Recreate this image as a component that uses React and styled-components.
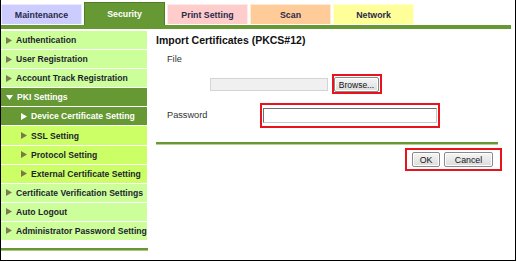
import React from "react";
import styled, { createGlobalStyle } from "styled-components";

const Global = createGlobalStyle`
  html, body { margin: 0; padding: 0; background: #fff; }
  body { font-family: "Liberation Sans", Arial, sans-serif; }
`;

const Frame = styled.div`
  box-sizing: border-box;
  width: 516px;
  height: 261px;
  border: 1px solid #000;
  border-top: none;
  background: #fff;
  display: flex;
  flex-direction: column;
  overflow: hidden;
`;

const TabBar = styled.div`
  display: flex;
  align-items: flex-end;
  gap: 2px;
  height: 25px;
`;

const TABS = {
  maintenance: { bg: "#ccccff", fg: "#2a2a4a" },
  security: { bg: "#669933", fg: "#ffffff" },
  print: { bg: "#ffcccc", fg: "#2a2a4a" },
  scan: { bg: "#ffcc99", fg: "#2a2a4a" },
  network: { bg: "#ffff99", fg: "#2a2a4a" },
};

const Tab = styled.div`
  box-sizing: border-box;
  width: 81px;
  height: ${(p) => (p.$active ? "23px" : "20px")};
  margin-bottom: ${(p) => (p.$active ? "0" : "1px")};
  background: ${(p) => TABS[p.$kind].bg};
  color: ${(p) => TABS[p.$kind].fg};
  border: 1px solid ${(p) => (p.$active ? "#4f7d25" : "rgba(255,255,255,0.6)")};
  border-bottom: none;
  font-size: 8.8px;
  font-weight: bold;
  display: flex;
  align-items: center;
  justify-content: center;
`;

const GreenBar = styled.div`
  height: 4px;
  margin-right: 4px;
  background: #669933;
`;

const Body = styled.div`
  display: flex;
  flex: 1;
`;

const Sidebar = styled.div`
  width: 146px;
  padding-top: 2px;
  display: flex;
  flex-direction: column;
`;

const ROW = {
  top: { bg: "#ccff99", fg: "#1e1e30", arrow: "#7a7a55" },
  sub: { bg: "#ccff66", fg: "#1e1e30", arrow: "#7a7a44" },
  open: { bg: "#669933", fg: "#ffffff", arrow: "#ffffff" },
  current: { bg: "#669933", fg: "#ffffff", arrow: "#ffffff" },
};

const NavRow = styled.div`
  box-sizing: border-box;
  height: 19.1px;
  border-bottom: 1px solid #fff;
  background: ${(p) => ROW[p.$kind].bg};
  color: ${(p) => ROW[p.$kind].fg};
  font-size: 8.6px;
  font-weight: bold;
  display: flex;
  align-items: center;
  gap: 4px;
  padding-left: ${(p) => (p.$indent ? "20px" : "5px")};
  white-space: nowrap;
  svg { flex-shrink: 0; }
`;

const SideRule = styled.div`
  height: 2px;
  margin-top: 7px;
  margin-right: -1px;
  background: #669933;
  border-bottom: 1px solid #a8c884;
`;

const Arrow = ({ color, down }) =>
  down ? (
    <svg width="7" height="7" viewBox="0 0 7 7">
      <polygon points="0,1 7,1 3.5,6" fill={color} />
    </svg>
  ) : (
    <svg width="6" height="7" viewBox="0 0 6 7">
      <polygon points="0,0 6,3.5 0,7" fill={color} />
    </svg>
  );

const Content = styled.div`
  flex: 1;
  padding-left: 2px;
  display: flex;
  flex-direction: column;
`;

const Title = styled.div`
  margin-top: 4px;
  margin-left: 7px;
  font-size: 10.5px;
  line-height: 15px;
  font-weight: bold;
  color: #111;
`;

const Label = styled.div`
  font-size: 9.2px;
  line-height: 13px;
  color: #333;
  width: ${(p) => p.$w || "auto"};
`;

const FileLabel = styled(Label)`
  margin-top: 5px;
  margin-left: 18px;
`;

const FileRow = styled.div`
  margin-top: 8px;
  margin-left: 61px;
  display: flex;
  align-items: center;
  gap: 4px;
`;

const FileBox = styled.div`
  box-sizing: border-box;
  width: 118px;
  height: 13px;
  background: #f0f0f0;
  border: 1px solid #d4d4d4;
`;

const Highlight = styled.div`
  border: 2px solid #e8141c;
  display: flex;
  align-items: center;
  gap: 4px;
  padding: ${(p) => p.$pad};
`;

const Button = styled.button`
  box-sizing: border-box;
  width: ${(p) => p.$w};
  height: ${(p) => p.$h || "15px"};
  padding: 0;
  margin: 0;
  font-family: "Liberation Sans", Arial, sans-serif;
  font-size: ${(p) => p.$fs || "8.8px"};
  color: #111;
  background: linear-gradient(#f6f6f6, #dcdcdc);
  border: 1px solid #8a8a8a;
  border-radius: 2px;
  box-shadow: inset 0 0 0 1px #fff;
  display: flex;
  align-items: center;
  justify-content: center;
`;

const PasswordRow = styled.div`
  margin-top: 9px;
  margin-left: 18px;
  display: flex;
  align-items: center;
`;

const TextInput = styled.div`
  box-sizing: border-box;
  width: 174px;
  height: 15px;
  background: #fff;
  border: 1px solid #8e8e8e;
  border-top-color: #6e6e6e;
  border-left-color: #6e6e6e;
  border-bottom-color: #c8c8c8;
  border-right-color: #c8c8c8;
`;

const ContentRule = styled.div`
  margin-top: 14px;
  margin-left: 7px;
  width: 342px;
  height: 2px;
  background: #669933;
  border-bottom: 1px solid #b6d196;
`;

const ButtonRow = styled.div`
  margin-top: 3px;
  padding-right: 13px;
  display: flex;
  justify-content: flex-end;
`;

const nav = [
  { t: "Authentication", k: "top" },
  { t: "User Registration", k: "top" },
  { t: "Account Track Registration", k: "top" },
  { t: "PKI Settings", k: "open", down: true },
  { t: "Device Certificate Setting", k: "current", indent: true },
  { t: "SSL Setting", k: "sub", indent: true },
  { t: "Protocol Setting", k: "sub", indent: true },
  { t: "External Certificate Setting", k: "sub", indent: true },
  { t: "Certificate Verification Settings", k: "top" },
  { t: "Auto Logout", k: "top" },
  { t: "Administrator Password Setting", k: "top" },
];

export default function App() {
  return (
    <>
      <Global />
      <Frame>
        <TabBar>
          <Tab $kind="maintenance">Maintenance</Tab>
          <Tab $kind="security" $active>Security</Tab>
          <Tab $kind="print">Print Setting</Tab>
          <Tab $kind="scan">Scan</Tab>
          <Tab $kind="network">Network</Tab>
        </TabBar>
        <GreenBar />
        <Body>
          <Sidebar>
            {nav.map((n) => (
              <NavRow key={n.t} $kind={n.k} $indent={n.indent}>
                <Arrow color={ROW[n.k].arrow} down={n.down} />
                {n.t}
              </NavRow>
            ))}
            <SideRule />
          </Sidebar>
          <Content>
            <Title>Import Certificates (PKCS#12)</Title>
            <FileLabel>File</FileLabel>
            <FileRow>
              <FileBox />
              <Highlight $pad="1px 1px 0 0">
                <Button $w="45px" $h="15px" $fs="8.5px">Browse...</Button>
              </Highlight>
            </FileRow>
            <PasswordRow>
              <Label $w="93px">Password</Label>
              <Highlight $pad="3px 1px 3px 1px">
                <TextInput />
              </Highlight>
            </PasswordRow>
            <ContentRule />
            <ButtonRow>
              <Highlight $pad="2px 7px 2px 5px">
                <Button $w="28px">OK</Button>
                <Button $w="49px">Cancel</Button>
              </Highlight>
            </ButtonRow>
          </Content>
        </Body>
      </Frame>
    </>
  );
}
